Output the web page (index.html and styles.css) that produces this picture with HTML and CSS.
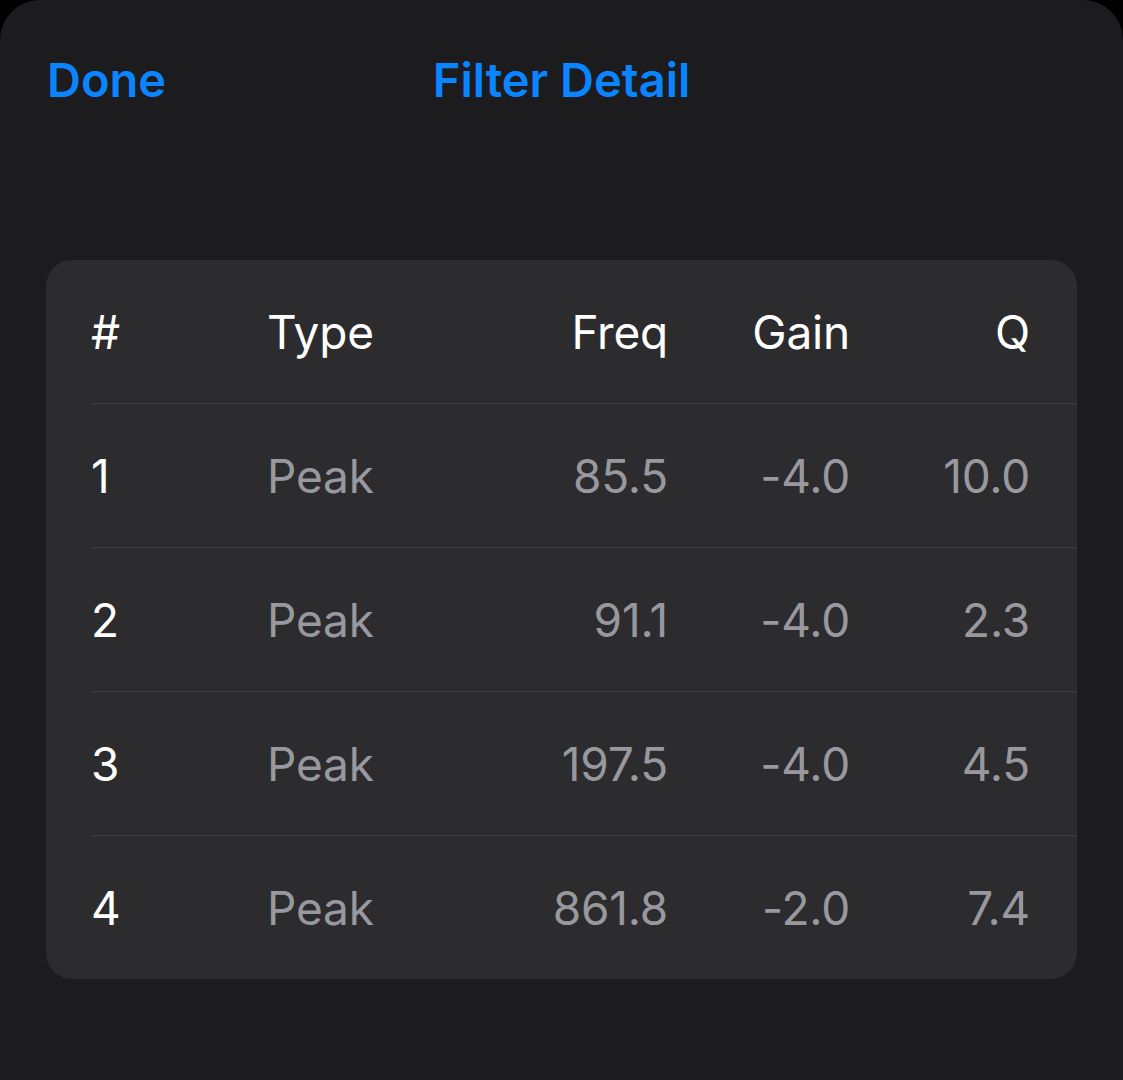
FILE: index.html
```html
<!DOCTYPE html>
<html>
<head>
<meta charset="utf-8">
<link rel="stylesheet" href="styles.css">
</head>
<body>
<div class="sheet">
  <header class="nav">
    <span class="done">Done</span>
    <span class="title">Filter Detail</span>
  </header>
  <section class="card">
    <div class="row head">
      <span class="c-num">#</span>
      <span class="c-type">Type</span>
      <span class="c-freq">Freq</span>
      <span class="c-gain">Gain</span>
      <span class="c-q">Q</span>
    </div>
    <div class="row">
      <span class="c-num">1</span>
      <span class="c-type">Peak</span>
      <span class="c-freq">85.5</span>
      <span class="c-gain">-4.0</span>
      <span class="c-q">10.0</span>
    </div>
    <div class="row">
      <span class="c-num">2</span>
      <span class="c-type">Peak</span>
      <span class="c-freq">91.1</span>
      <span class="c-gain">-4.0</span>
      <span class="c-q">2.3</span>
    </div>
    <div class="row">
      <span class="c-num">3</span>
      <span class="c-type">Peak</span>
      <span class="c-freq">197.5</span>
      <span class="c-gain">-4.0</span>
      <span class="c-q">4.5</span>
    </div>
    <div class="row last">
      <span class="c-num">4</span>
      <span class="c-type">Peak</span>
      <span class="c-freq">861.8</span>
      <span class="c-gain">-2.0</span>
      <span class="c-q">7.4</span>
    </div>
  </section>
</div>
</body>
</html>
```
FILE: styles.css
```css
html, body {
  margin: 0;
  padding: 0;
  background: #000;
  height: 100%;
}
body {
  font-family: Inter, "Noto Sans", "Liberation Sans", sans-serif;
}
.sheet {
  background: #1c1c1e;
  min-height: 1080px;
  border-radius: 40px 40px 0 0;
  box-sizing: border-box;
  padding: 0 46px 0 46px;
}
.nav {
  position: relative;
  height: 160px;
  display: flex;
  align-items: flex-start;
  padding-top: 52px;
  box-sizing: border-box;
}
.done, .title {
  color: #0a84ff;
  font-size: 47px;
  font-weight: 600;
  line-height: 56px;
}
.done {
  margin-left: 1px;
}
.title {
  position: absolute;
  left: 0;
  right: 0;
  top: 52px;
  text-align: center;
}
.nav .done { position: relative; z-index: 1; }
.card {
  margin-top: 100px;
  background: #2c2c2e;
  border-radius: 26px;
  padding-left: 45px;
}
.row {
  display: grid;
  grid-template-columns: 176px 160px 241px 182px 180px;
  align-items: center;
  height: 143px;
  border-bottom: 1px solid #3d3d40;
  font-size: 46px;
  color: #98989e;
  letter-spacing: -0.2px;
}
.row.last { border-bottom: none; height: 143px; }
.row.head { color: #fff; }
.row .c-num { color: #fff; }
.c-freq, .c-gain, .c-q { text-align: right; }
```
